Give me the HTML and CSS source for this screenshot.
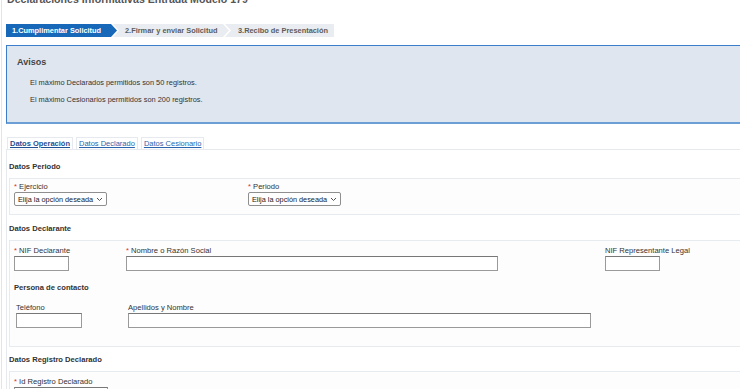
FILE: index.html
```html
<!DOCTYPE html>
<html lang="es">
<head>
  <meta charset="UTF-8">
  <meta name="viewport" content="width=device-width, initial-scale=1.0">
  <title>Declaraciones Informativas Entrada Modelo 179</title>
  <link rel="stylesheet" href="styles.css">
</head>
<body>
  <div class="pagina">
    <h1 class="titulo">Declaraciones Informativas Entrada Modelo 179</h1>

    <div class="pasos">
      <div class="paso paso-1 activo">1.Cumplimentar Solicitud</div>
      <div class="paso paso-2">2.Firmar y enviar Solicitud</div>
      <div class="paso paso-3">3.Recibo de Presentación</div>
    </div>

    <div class="avisos">
      <h3>Avisos</h3>
      <p>El máximo Declarados permitidos son 50 registros.</p>
      <p>El máximo Cesionarios permitidos son 200 registros.</p>
    </div>

    <div class="pestanas">
      <a href="#" class="pestana activa">Datos Operación</a>
      <a href="#" class="pestana">Datos Declarado</a>
      <a href="#" class="pestana">Datos Cesionario</a>
    </div>

    <div class="panel">
      <h4 class="seccion-titulo">Datos Periodo</h4>
      <div class="seccion">
        <div class="fila fila-periodo">
          <div class="campo">
            <label><span class="req">*</span> Ejercicio</label>
            <div class="select">Elija la opción deseada
              <svg width="7" height="5" viewBox="0 0 7 5"><path d="M1 1l2.5 2.5L6 1" fill="none" stroke="#555" stroke-width="1"/></svg>
            </div>
          </div>
          <div class="campo">
            <label><span class="req">*</span> Periodo</label>
            <div class="select">Elija la opción deseada
              <svg width="7" height="5" viewBox="0 0 7 5"><path d="M1 1l2.5 2.5L6 1" fill="none" stroke="#555" stroke-width="1"/></svg>
            </div>
          </div>
        </div>
      </div>

      <h4 class="seccion-titulo">Datos Declarante</h4>
      <div class="seccion seccion-declarante">
        <div class="fila fila-declarante">
          <div class="campo">
            <label><span class="req">*</span> NIF Declarante</label>
            <input type="text" class="input w-nif">
          </div>
          <div class="campo">
            <label><span class="req">*</span> Nombre o Razón Social</label>
            <input type="text" class="input w-nombre">
          </div>
          <div class="campo">
            <label>NIF Representante Legal</label>
            <input type="text" class="input w-nif">
          </div>
        </div>

        <h5 class="subtitulo">Persona de contacto</h5>
        <div class="fila fila-contacto">
          <div class="campo">
            <label>Teléfono</label>
            <input type="text" class="input w-tel">
          </div>
          <div class="campo">
            <label>Apellidos y Nombre</label>
            <input type="text" class="input w-apellidos">
          </div>
        </div>
      </div>

      <h4 class="seccion-titulo">Datos Registro Declarado</h4>
      <div class="seccion seccion-registro">
        <div class="campo">
          <label><span class="req">*</span> Id Registro Declarado</label>
          <input type="text" class="input w-id">
        </div>
      </div>
    </div>
  </div>
</body>
</html>
```

FILE: styles.css
```css
html, body { overflow: hidden; }
body {
  margin: 0;
  font-family: "Liberation Sans", Arial, sans-serif;
  color: #333;
  background: #fff;
}
.pagina {
  width: 1000px;
  margin-left: 1px;
  border-left: 1px solid #e2e4e7;
  padding-left: 4px;
  min-height: 400px;
}
.titulo {
  margin: -8px 0 0 1px;
  font-size: 10.6px;
  line-height: 14px;
  color: #555;
  font-weight: bold;
}

/* pasos */
.pasos {
  display: flex;
  margin-top: 18px;
  height: 13px;
}
.paso {
  font-size: 7.4px;
  font-weight: bold;
  line-height: 13px;
  color: #5c5c5c;
  background: #e9ecf0;
  box-sizing: border-box;
  white-space: nowrap;
}
.paso-1 {
  width: 111px;
  padding-left: 6px;
  clip-path: polygon(0 0, calc(100% - 6px) 0, 100% 50%, calc(100% - 6px) 100%, 0 100%);
}
.paso-2 {
  width: 116px;
  margin-left: -4px;
  padding-left: 12px;
  clip-path: polygon(0 0, calc(100% - 6px) 0, 100% 50%, calc(100% - 6px) 100%, 0 100%, 6px 50%);
}
.paso-3 {
  width: 109px;
  margin-left: -4px;
  padding-left: 13px;
  clip-path: polygon(0 0, 100% 0, 100% 100%, 0 100%, 6px 50%);
}
.paso.activo { background: #1768b8; color: #fff; }

/* avisos */
.avisos {
  margin-top: 8px;
  height: 79px;
  box-sizing: border-box;
  background: #dfe6ef;
  border: 1px solid #3b7dc9;
  border-bottom: 2px solid #6b9fd5;
  padding: 10px 0 0 10px;
}
.avisos h3 {
  margin: 0 0 10px;
  font-size: 9px;
  line-height: 12px;
  color: #444;
}
.avisos p {
  margin: 0 0 7px 13px;
  font-size: 7.4px;
  line-height: 10px;
  color: #333;
}

/* pestanas */
.pestanas {
  display: flex;
  gap: 3px;
  margin-top: 13px;
  padding-left: 1px;
}
.pestana {
  font-size: 7.5px;
  line-height: 10px;
  padding: 1px 2px 0;
  color: #2b64ad;
  border: 1px solid #e6e9ed;
  border-bottom: none;
}
.pestana.activa { font-weight: bold; color: #1f4f93; }

.panel {
  border-top: 1px solid #e6e9ed;
  border-left: 1px solid #e6e9ed;
  padding: 12px 0 0 2px;
}
.seccion-titulo {
  margin: 0 0 6px;
  font-size: 7.6px;
  line-height: 10px;
  color: #333;
}
.seccion {
  border: 1px solid #e6ebf0;
  background: #fdfdfe;
  padding: 3px 4px 8px;
  margin-bottom: 9px;
}
.seccion-declarante { padding-top: 5px; padding-bottom: 18px; margin-bottom: 8px; }
.seccion-registro { padding-top: 5px; }

.fila { display: grid; }
.fila-periodo { grid-template-columns: 234px 1fr; }
.fila-declarante { grid-template-columns: 112px 479px 1fr; }
.fila-contacto { grid-template-columns: 112px 1fr; padding-left: 2px; }

.campo label {
  display: block;
  font-size: 7.6px;
  line-height: 10px;
  color: #333;
}
.req { color: #d33; }

.select {
  display: flex;
  width: max-content;
  align-items: center;
  gap: 3px;
  box-sizing: border-box;
  height: 14px;
  padding: 0 3px 0 3px;
  font-size: 7.3px;
  color: #222;
  border: 1px solid #8f8f8f;
  border-radius: 2px;
  background: #fff;
}

.input {
  display: block;
  box-sizing: border-box;
  height: 15px;
  margin: 0;
  padding: 0;
  border: 1px solid #9a9a9a;
  border-top-color: #777;
  background: #fff;
}
.w-nif { width: 55px; }
.w-nombre { width: 372px; }
.w-tel { width: 66px; }
.w-apellidos { width: 463px; }
.w-id { width: 94px; }

.subtitulo {
  margin: 12px 0 10px;
  font-size: 7.6px;
  line-height: 10px;
  color: #333;
}
```
